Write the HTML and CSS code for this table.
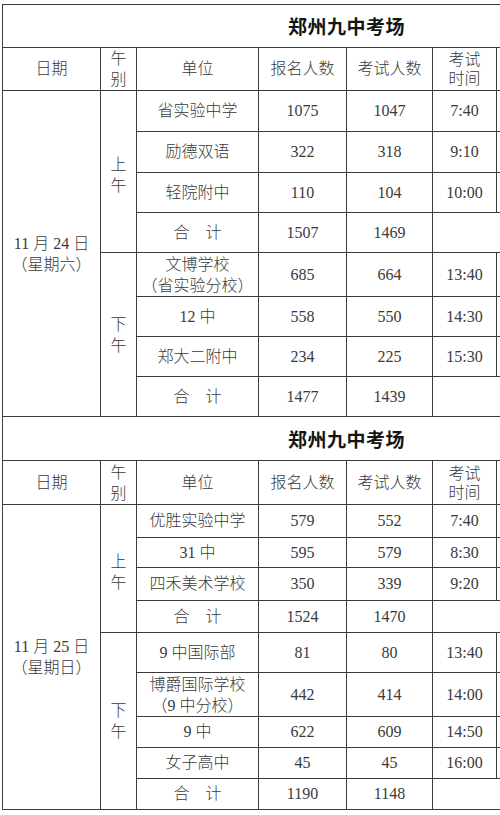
FILE: index.html
```html
<!DOCTYPE html>
<html lang="zh">
<head>
<meta charset="utf-8">
<title>郑州九中考场</title>
<link rel="stylesheet" href="styles.css">
</head>
<body>
<div class="page">
<table class="sched">
<colgroup>
<col class="c-date"><col class="c-half"><col class="c-unit"><col class="c-num"><col class="c-num2"><col class="c-time"><col class="c-rest">
</colgroup>
<tbody>
<tr class="h43"><td colspan="7" class="title">郑州九中考场</td></tr>
<tr class="h43">
<td>日期</td><td class="two">午<br>别</td><td>单位</td><td>报名人数</td><td>考试人数</td><td class="two tight">考试<br>时间</td><td></td>
</tr>
<tr class="h41">
<td rowspan="8" class="two date">11 月 24 日<br>（星期六）</td>
<td rowspan="4" class="two half up">上<br>午</td>
<td>省实验中学</td><td>1075</td><td>1047</td><td>7:40</td><td></td>
</tr>
<tr class="h41"><td>励德双语</td><td>322</td><td>318</td><td>9:10</td><td></td></tr>
<tr class="h40"><td>轻院附中</td><td>110</td><td>104</td><td>10:00</td><td></td></tr>
<tr class="h40"><td>合　计</td><td>1507</td><td>1469</td><td colspan="2"></td></tr>
<tr class="h44">
<td rowspan="4" class="two half">下<br>午</td>
<td class="two">文博学校<br>（省实验分校）</td><td>685</td><td>664</td><td>13:40</td><td></td>
</tr>
<tr class="h40"><td>12 中</td><td>558</td><td>550</td><td>14:30</td><td></td></tr>
<tr class="h40"><td>郑大二附中</td><td>234</td><td>225</td><td>15:30</td><td></td></tr>
<tr class="h40"><td>合　计</td><td>1477</td><td>1439</td><td colspan="2"></td></tr>

<tr class="h44"><td colspan="7" class="title">郑州九中考场</td></tr>
<tr class="h44">
<td>日期</td><td class="two">午<br>别</td><td>单位</td><td>报名人数</td><td>考试人数</td><td class="two tight">考试<br>时间</td><td></td>
</tr>
<tr class="h33">
<td rowspan="9" class="two date">11 月 25 日<br>（星期日）</td>
<td rowspan="4" class="two half up">上<br>午</td>
<td>优胜实验中学</td><td>579</td><td>552</td><td>7:40</td><td></td>
</tr>
<tr class="h30"><td>31 中</td><td>595</td><td>579</td><td>8:30</td><td></td></tr>
<tr class="h33"><td>四禾美术学校</td><td>350</td><td>339</td><td>9:20</td><td></td></tr>
<tr class="h32"><td>合　计</td><td>1524</td><td>1470</td><td colspan="2"></td></tr>
<tr class="h40">
<td rowspan="5" class="two half">下<br>午</td>
<td>9 中国际部</td><td>81</td><td>80</td><td>13:40</td><td></td>
</tr>
<tr class="h44"><td class="two">博爵国际学校<br>（9 中分校）</td><td>442</td><td>414</td><td>14:00</td><td></td></tr>
<tr class="h31"><td>9 中</td><td>622</td><td>609</td><td>14:50</td><td></td></tr>
<tr class="h31"><td>女子高中</td><td>45</td><td>45</td><td>16:00</td><td></td></tr>
<tr class="h31"><td>合　计</td><td>1190</td><td>1148</td><td colspan="2"></td></tr>
</tbody>
</table>
</div>
</body>
</html>
```
FILE: styles.css
```css
html, body {
  margin: 0;
  padding: 0;
  background: #ffffff;
}
.page {
  width: 500px;
  height: 815px;
  overflow: hidden;
  padding: 4px 0 0 2px;
  box-sizing: border-box;
}
.sched {
  border-collapse: collapse;
  table-layout: fixed;
  width: 688px;
  font-family: "Liberation Serif", "Noto Sans CJK SC", serif;
  font-size: 16px;
  color: #3a3a3a;
  font-weight: 300;
}
.c-date { width: 98px; }
.c-half { width: 36px; }
.c-unit { width: 122px; }
.c-num { width: 88px; }
.c-num2 { width: 86px; }
.c-time { width: 64px; }
.c-rest { width: 194px; }
.sched td {
  border: 1.5px solid #3c3c3c;
  padding: 0;
  text-align: center;
  vertical-align: middle;
  line-height: 20px;
  white-space: nowrap;
}
.sched td.two { line-height: 21px; }
.sched td.tight { line-height: 19px; }
.sched td.title {
  font-family: "Noto Sans CJK SC", sans-serif;
  font-weight: 700;
  font-size: 19px;
  color: #151515;
  letter-spacing: 0.5px;
}
.sched td.date { line-height: 21px; }
.sched td.up { padding-top: 6px; }
.h30 { height: 30px; }
.h31 { height: 31px; }
.h32 { height: 32px; }
.h33 { height: 33px; }
.h40 { height: 40px; }
.h41 { height: 41px; }
.h43 { height: 43px; }
.h44 { height: 44px; }
```
